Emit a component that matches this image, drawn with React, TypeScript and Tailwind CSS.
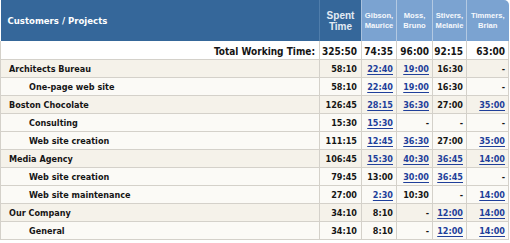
import React from "react";

type Cell = { v: string; link?: boolean };
type Row = { name: string; sub?: boolean; spent: string; cells: Cell[] };

const L = (v: string): Cell => ({ v, link: true });
const T = (v: string): Cell => ({ v });

const rows: Row[] = [
  { name: "Architects Bureau", spent: "58:10", cells: [L("22:40"), L("19:00"), T("16:30"), T("-")] },
  { name: "One-page web site", sub: true, spent: "58:10", cells: [L("22:40"), L("19:00"), T("16:30"), T("-")] },
  { name: "Boston Chocolate", spent: "126:45", cells: [L("28:15"), L("36:30"), T("27:00"), L("35:00")] },
  { name: "Consulting", sub: true, spent: "15:30", cells: [L("15:30"), T("-"), T("-"), T("-")] },
  { name: "Web site creation", sub: true, spent: "111:15", cells: [L("12:45"), L("36:30"), T("27:00"), L("35:00")] },
  { name: "Media Agency", spent: "106:45", cells: [L("15:30"), L("40:30"), L("36:45"), L("14:00")] },
  { name: "Web site creation", sub: true, spent: "79:45", cells: [T("13:00"), L("30:00"), L("36:45"), T("-")] },
  { name: "Web site maintenance", sub: true, spent: "27:00", cells: [L("2:30"), T("10:30"), T("-"), L("14:00")] },
  { name: "Our Company", spent: "34:10", cells: [T("8:10"), T("-"), L("12:00"), L("14:00")] },
  { name: "General", sub: true, spent: "34:10", cells: [T("8:10"), T("-"), L("12:00"), L("14:00")] },
];

const people = [
  ["Gibson,", "Maurice"],
  ["Moss,", "Bruno"],
  ["Stivers,", "Melanie"],
  ["Timmers,", "Brian"],
];

const body = "[font-family:'DejaVu_Sans_Condensed','DejaVu_Sans',sans-serif] font-stretch-condensed";

export default function App() {
  return (
    <div className="w-[510px] h-[243px] bg-white">
      <table className={`table-fixed border-collapse w-[508px] text-[9px] font-bold text-[#151515] ${body}`}>
        <colgroup>
          <col className="w-[319px]" />
          <col className="w-[42px]" />
          <col className="w-[35px]" />
          <col className="w-[36px]" />
          <col className="w-[34px]" />
          <col className="w-[42px]" />
        </colgroup>
        <thead>
          <tr className="h-[41px]">
            <th className="bg-[#35679a] text-white text-left pl-[7px] pt-[2px] text-[9.5px] font-bold align-middle border-r border-[#4f7dab]">
              Customers / Projects
            </th>
            <th className="bg-[#35679a] text-[#e3ebf4] text-center align-middle font-bold text-[10px] leading-[11px] [font-family:'Liberation_Sans',Arial,sans-serif] border-r border-[#a9c1dd]">
              Spent
              <br />
              Time
            </th>
            {people.map((p, i) => (
              <th
                key={i}
                className={`bg-[#7ba3d1] text-[#f6f9fd] text-center align-middle font-bold text-[7.6px] leading-[10px] [font-family:'Liberation_Sans',Arial,sans-serif] ${
                  i < 3 ? "border-r border-[#b3c9e2]" : "rounded-tr-[5px]"
                }`}
              >
                {p[0]}
                <br />
                {p[1]}
              </th>
            ))}
          </tr>
        </thead>
        <tbody>
          <tr className="h-[18px] bg-white text-[10px]">
            <td className="text-right pr-[4px] pt-[3px] border-l border-b border-r border-[#d4d1ca]">Total Working Time:</td>
            <td className="text-right pr-[4px] pt-[3px] border-b border-r border-[#d4d1ca]">325:50</td>
            <td className="text-right pr-[3px] pt-[3px] border-b border-r border-[#d4d1ca]">74:35</td>
            <td className="text-right pr-[3px] pt-[3px] border-b border-r border-[#d4d1ca]">96:00</td>
            <td className="text-right pr-[3px] pt-[3px] border-b border-r border-[#d4d1ca]">92:15</td>
            <td className="text-right pr-[3px] pt-[3px] border-b border-r border-[#d4d1ca]">63:00</td>
          </tr>
          {rows.map((r, i) => (
            <tr key={i} className={`h-[18px] ${r.sub ? "bg-[#fbfaf6]" : "bg-[#f5f2ea]"}`}>
              <td className={`text-left pt-[2px] border-l border-b border-r border-[#d4d1ca] ${r.sub ? "pl-[28px]" : "pl-[8px]"}`}>
                {r.name}
              </td>
              <td className="text-right pr-[4px] pt-[2px] border-b border-r border-[#d4d1ca]">{r.spent}</td>
              {r.cells.map((c, j) => (
                <td key={j} className="text-right pr-[3px] pt-[2px] border-b border-r border-[#d4d1ca]">
                  {c.link ? (
                    <span className="text-[#1f3f9a] underline underline-offset-[2px]">{c.v}</span>
                  ) : (
                    c.v
                  )}
                </td>
              ))}
            </tr>
          ))}
        </tbody>
      </table>
    </div>
  );
}
